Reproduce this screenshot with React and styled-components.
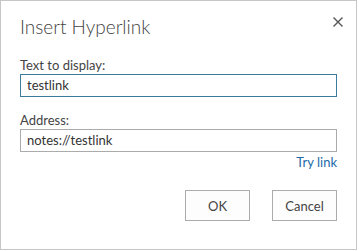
import React from "react";
import styled, { createGlobalStyle } from "styled-components";

const Global = createGlobalStyle`
  html, body { margin: 0; padding: 0; background: #ffffff; }
  body { font-family: Lato, "Open Sans", sans-serif; }
`;

const Dialog = styled.div`
  box-sizing: border-box;
  width: 357px;
  height: 250px;
  border: 1px solid #c6c6c6;
  background: #fff;
  padding: 0 19px;
  display: flex;
  flex-direction: column;
`;

const Header = styled.div`
  display: flex;
  align-items: flex-start;
  justify-content: space-between;
  height: 56px;
  padding-top: 12px;
  box-sizing: border-box;
`;

const Title = styled.h1`
  margin: 0;
  font-family: Lato, "Open Sans", sans-serif;
  font-weight: 300;
  font-size: 19px;
  line-height: 28px;
  color: #444;
`;

const CloseButton = styled.button`
  border: 0;
  background: none;
  padding: 0;
  margin: 4px -6px 0 0;
  width: 10px;
  height: 10px;
  display: flex;
  cursor: pointer;
`;

const Label = styled.label`
  display: block;
  font-family: Lato, "Open Sans", sans-serif;
  font-size: 13px;
  line-height: 16px;
  color: #444;
  margin-bottom: 1px;
`;

const Field = styled.div`
  display: flex;
  flex-direction: column;
  margin-bottom: ${(p) => p.$gap || 0}px;
`;

const Input = styled.div`
  box-sizing: border-box;
  height: 23px;
  border: 1px solid ${(p) => (p.$focused ? "#3a7a9a" : "#ababab")};
  padding: 0 6px;
  font-family: Lato, "Open Sans", sans-serif;
  font-size: 13px;
  line-height: 21px;
  color: #333;
`;

const LinkRow = styled.div`
  display: flex;
  justify-content: flex-end;
  margin-top: 2px;
`;

const TryLink = styled.a`
  font-family: Lato, "Open Sans", sans-serif;
  font-size: 13px;
  line-height: 17px;
  color: #1a6aa8;
  text-decoration: none;
`;

const Buttons = styled.div`
  display: flex;
  justify-content: flex-end;
  gap: 22px;
  margin-top: 19px;
`;

const Button = styled.button`
  box-sizing: border-box;
  width: 65px;
  height: 31px;
  border: 1px solid #ababab;
  background: #fdfdfd;
  font-family: Lato, "Open Sans", sans-serif;
  font-size: 13px;
  color: #444;
  padding: 0;
`;

export default function App() {
  return (
    <>
      <Global />
      <Dialog>
        <Header>
          <Title>Insert Hyperlink</Title>
          <CloseButton aria-label="Close">
            <svg width="10" height="10" viewBox="0 0 10 10">
              <path d="M0.5 0.5 L9.5 9.5 M9.5 0.5 L0.5 9.5" stroke="#555" strokeWidth="1.4" />
            </svg>
          </CloseButton>
        </Header>
        <Field $gap={15}>
          <Label>Text to display:</Label>
          <Input $focused>testlink</Input>
        </Field>
        <Field>
          <Label>Address:</Label>
          <Input>notes://testlink</Input>
        </Field>
        <LinkRow>
          <TryLink href="#">Try link</TryLink>
        </LinkRow>
        <Buttons>
          <Button>OK</Button>
          <Button>Cancel</Button>
        </Buttons>
      </Dialog>
    </>
  );
}
